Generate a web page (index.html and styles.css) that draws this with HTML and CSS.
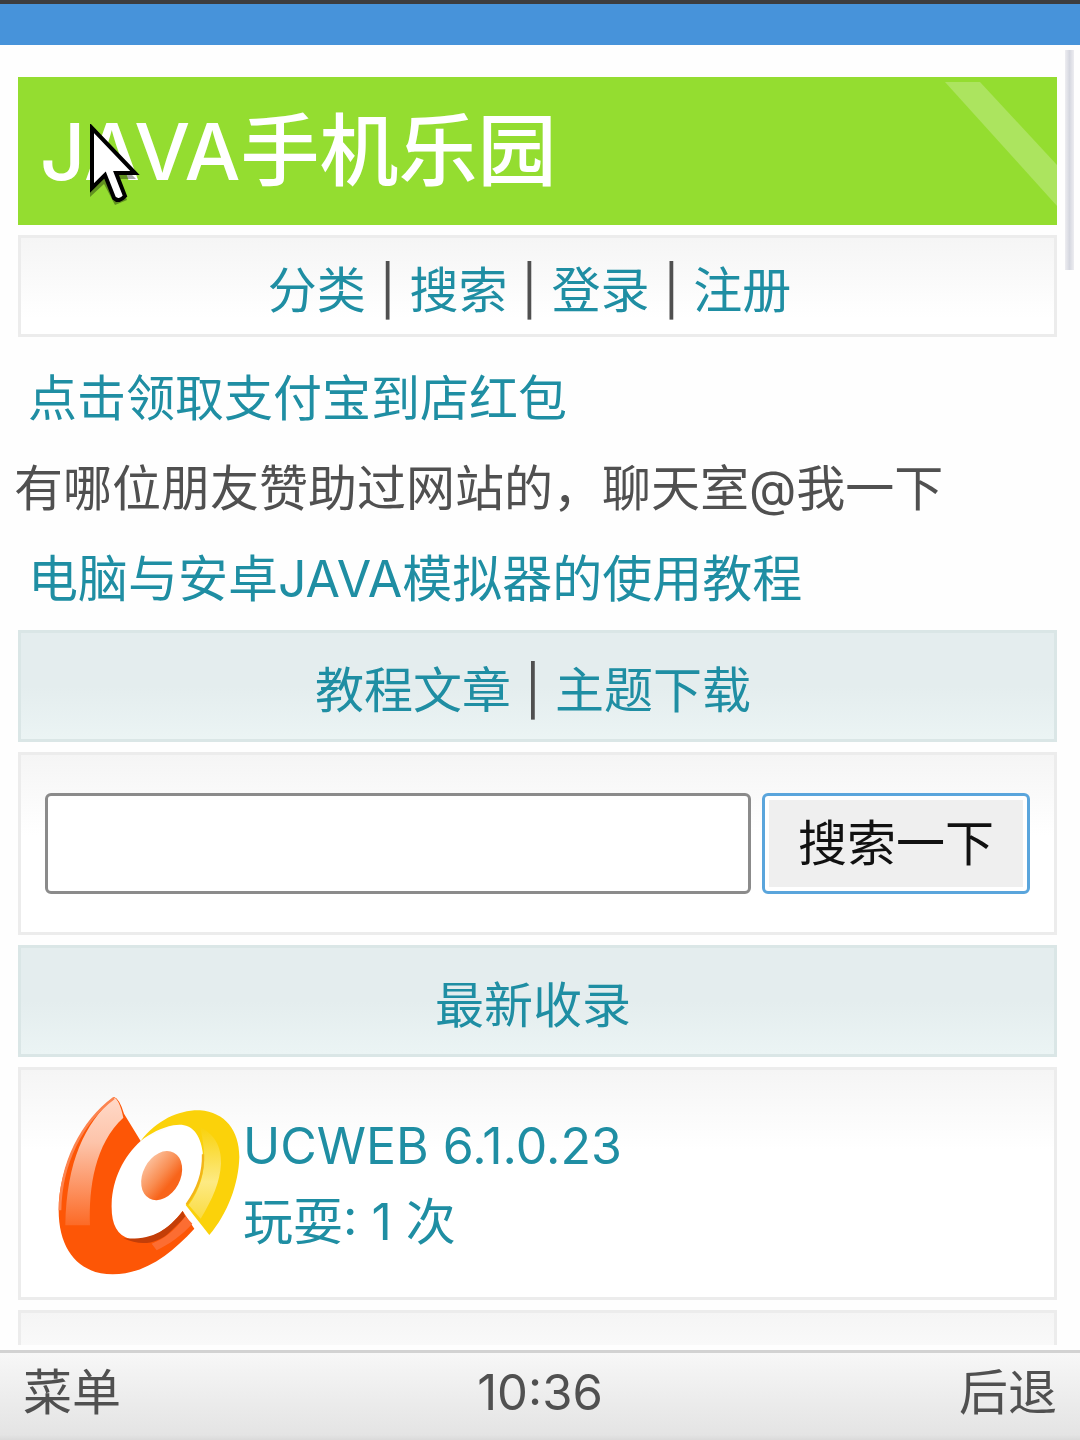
FILE: index.html
```
<!DOCTYPE html>
<html lang="zh-CN">
<head>
  <meta charset="utf-8">
  <title>JAVA手机乐园</title>
  <link rel="stylesheet" href="styles.css">
</head>
<body>
  <div class="title-bar"></div>

  <main class="page">
    <header class="header">
      <h1>JAVA手机乐园</h1>
      <svg class="header-stripe" viewBox="0 0 112 124" aria-hidden="true">
        <path d="M0 0H35L112 83V124Z" fill="#ace45f"/>
      </svg>
    </header>

    <nav class="box nav">
      <a href="#">分类</a> | <a href="#">搜索</a> | <a href="#">登录</a> | <a href="#">注册</a>
    </nav>

    <div class="notice">
      <p><a href="#">点击领取支付宝到店红包</a></p>
      <p class="message">有哪位朋友赞助过网站的，聊天室@我一下</p>
      <p class="guide"><a href="#">电脑与安卓JAVA模拟器的使用教程</a></p>
    </div>

    <div class="box bar">
      <a href="#">教程文章</a> | <a href="#">主题下载</a>
    </div>

    <form class="box search">
      <input type="text" name="key" class="search-input" aria-label="搜索">
      <button type="button" class="search-btn">搜索一下</button>
    </form>

    <div class="box bar"><a href="#">最新收录</a></div>

    <a href="#" class="box item">
      <svg class="item-icon" viewBox="45 39 564 564" aria-hidden="true">
        <defs>
          <linearGradient id="shine" x1="0" y1="0" x2="0" y2="1">
            <stop offset="0" stop-color="#ffd9c8"/>
            <stop offset="0.35" stop-color="#fdc4aa"/>
            <stop offset="1" stop-color="#fc6a26"/>
          </linearGradient>
          <linearGradient id="core" x1="0" y1="0.3" x2="1" y2="0.6">
            <stop offset="0" stop-color="#fcc09c"/>
            <stop offset="0.5" stop-color="#f98c50"/>
            <stop offset="0.8" stop-color="#f8641a"/>
          </linearGradient>
          <linearGradient id="gold" x1="0" y1="0" x2="0" y2="1">
            <stop offset="0" stop-color="#f9d20c"/>
            <stop offset="0.6" stop-color="#fdea83"/>
            <stop offset="1" stop-color="#fadb42"/>
          </linearGradient>
        </defs>
        <path d="M302 192C250 240 218 305 215 380C213 440 230 474 270 486C330 490 380 465 440 384C475 338 493 285 488 225C480 165 450 135 400 145Z" fill="#fff"/>
        <path d="M222 60C120 140 56 275 56 400C56 520 118 592 218 592C310 592 390 535 463 455L428 402C380 465 330 490 270 486C230 474 213 440 215 380C218 305 250 240 302 192L252 110Q238 64 222 60Z" fill="#fd5606"/>
        <path d="M222 62C135 140 80 250 76 445L150 445C146 330 165 200 250 122Q238 66 222 62Z" fill="url(#shine)"/>
        <path d="M60 400C62 260 125 135 222 63" fill="none" stroke="#fc8450" stroke-width="8"/>
        <path d="M428 402C380 465 330 490 250 484C300 507 350 503 390 465L436 420Z" fill="#c33e08"/>
        <path d="M436 418C405 460 375 485 335 500L350 520C390 500 425 475 457 440Z" fill="#fc6d32"/>
        <path d="M302 192C350 128 420 98 480 100C555 106 598 160 598 240C596 320 563 410 508 474L437 384C475 338 493 285 488 225C480 165 450 135 400 145C363 153 333 168 302 192Z" fill="#fbd20a"/>
        <path d="M480 150C520 170 545 205 543 260C540 315 518 365 482 425L446 384C480 338 496 285 492 225C490 195 485 170 480 150Z" fill="url(#gold)"/>
        <path d="M489 232C491 290 475 335 440 382" fill="none" stroke="#f2b51a" stroke-width="7"/>
        <ellipse cx="365" cy="296" rx="56" ry="78" transform="rotate(28 365 296)" fill="url(#core)"/>
      </svg>
      <span class="item-text">
        <span>UCWEB 6.1.0.23</span>
        <span>玩耍: 1 次</span>
      </span>
    </a>

    <div class="box item"></div>
  </main>

  <footer class="soft-keys">
    <button type="button">菜单</button>
    <time>10:36</time>
    <button type="button">后退</button>
  </footer>

  <div class="scrollbar"></div>

  <svg class="cursor" viewBox="0 0 56 84" aria-hidden="true">
    <path d="M2 8V73L16 60L27 81L39 76L30 55H48Z" fill="#000" opacity="0.35"/>
    <path d="M4 4V64L17 51L26 74Q31 79 37 72L28 49H47Z" fill="#fff" stroke="#000" stroke-width="4"/>
  </svg>
</body>
</html>
```

FILE: styles.css
```
* {
  box-sizing: border-box;
}

body {
  margin: 0;
  height: 100vh;
  display: flex;
  flex-direction: column;
  position: relative;
  overflow: hidden;
  background-color: #fefefe;
  color: #505050;
  font-family: Inter, "Noto Sans CJK SC", sans-serif;
  font-size: 49px;
  line-height: 76px;
}

a {
  color: #1f8ea3;
  text-decoration: none;
}

.title-bar {
  flex: none;
  height: 45px;
  border-top: 4px solid #3d3d3f;
  background-color: #4793da;
}

.page {
  flex: 1;
  min-height: 0;
  display: flex;
  flex-direction: column;
  gap: 10px;
  margin-bottom: 5px;
  padding: 32px 23px 0 18px;
  overflow: hidden;
}

.header {
  flex: none;
  position: relative;
  padding: 20px 22px;
  background-color: #94dd30;
}

.header h1 {
  margin: 0;
  color: #fff;
  font-size: 79px;
  font-weight: 500;
  line-height: 108px;
}

.header-stripe {
  position: absolute;
  top: 5px;
  right: 0;
  width: 112px;
  height: 124px;
}

.box {
  flex: none;
  border: 3px solid #ececec;
  background: linear-gradient(#f5f5f5, #fff 80px);
}

.nav {
  padding: 15px 16px 5px 0;
  text-align: center;
}

.notice {
  display: flex;
  flex-direction: column;
  gap: 14px;
  padding: 14px 0 3px;
}

.notice p {
  margin: 0;
  padding-left: 10px;
}

.notice .message {
  margin-left: -4px;
  padding-left: 0;
}

.guide {
  font-size: 50px;
}

.bar {
  padding: 20px 9px 10px 0;
  border-color: #dae6e6;
  background: linear-gradient(#e4edee 50%, #ebf4f4);
  text-align: center;
}

.search {
  display: flex;
  gap: 11px;
  padding: 38px 24px;
}

.search-input,
.search-btn {
  height: 101px;
  border: 3px solid #8b8b8b;
  border-radius: 6px;
  font: inherit;
}

.search-input {
  flex: 1;
  min-width: 0;
  padding: 0 12px;
  background-color: #fff;
}

.search-btn {
  padding: 0 33px;
  border-color: #5aa5dc;
  background-color: #efefef;
  box-shadow: inset 0 0 0 4px #fff;
  color: #111;
}

.item {
  display: flex;
  align-items: center;
  min-height: 233px;
  padding: 16px 34px;
}

.item-icon {
  width: 188px;
  height: 188px;
}

.item-text {
  display: flex;
  flex-direction: column;
  font-size: 50px;
}

.soft-keys {
  flex: none;
  display: grid;
  grid-template-columns: 1fr auto 1fr;
  align-items: center;
  height: 90px;
  padding: 0 23px 8px;
  border-top: 3px solid #d2d2d2;
  background: linear-gradient(#f7f7f7, #e4e4e4 94%, #dadada);
}

.soft-keys button {
  justify-self: start;
  padding: 0;
  border: 0;
  background: none;
  color: inherit;
  font: inherit;
}

.soft-keys button:last-child {
  justify-self: end;
}

.scrollbar {
  position: absolute;
  top: 50px;
  right: 6px;
  width: 9px;
  height: 220px;
  background: linear-gradient(to right, #ededf1, #d5d7e0, #ededf1);
}

.cursor {
  position: absolute;
  top: 124px;
  left: 88px;
  width: 56px;
  height: 84px;
}
```
